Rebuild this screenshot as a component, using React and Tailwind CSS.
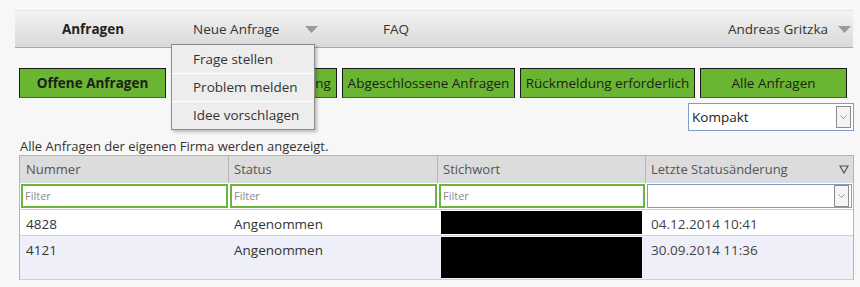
import React from 'react'

const font = { fontFamily: '"Open Sans", "Noto Sans", sans-serif' }

function Caret({ className = '' }) {
  return (
    <svg width="13" height="7" viewBox="0 0 13 7" className={className}>
      <path d="M0 0 H13 L6.5 7 Z" fill="#9a9a9a" />
    </svg>
  )
}

function SelectArrow() {
  return (
    <div className="w-[15px] h-[22px] border border-[#8a8a8a] bg-[#f4f4f4] flex items-center justify-center">
      <svg width="7" height="4" viewBox="0 0 7 4">
        <path d="M0.5 0.5 L3.5 3.5 L6.5 0.5" stroke="#9a9a9a" fill="none" />
      </svg>
    </div>
  )
}

const tabs = [
  { label: 'Offene Anfragen', w: 'w-[147px]', bold: true },
  { label: 'Anfragen in Bearbeitung', w: 'w-[166px]' },
  { label: 'Abgeschlossene Anfragen', w: 'w-[173px]' },
  { label: 'Rückmeldung erforderlich', w: 'w-[175px]' },
  { label: 'Alle Anfragen', w: 'w-[147px]' },
]

const rows = [
  { nr: '4828', status: 'Angenommen', date: '04.12.2014 10:41', h: 'h-[26px]', bg: 'bg-white' },
  { nr: '4121', status: 'Angenommen', date: '30.09.2014 11:36', h: 'h-[44px]', bg: 'bg-[#efeffa]' },
]

export default function App() {
  return (
    <div className="w-[860px] h-[287px] bg-[#f7f7f7] relative overflow-hidden text-[13px] text-[#333]" style={font}>
      {/* Navbar */}
      <div className="pt-[10px] pl-[15px]">
        <nav className="w-[838px] h-[38px] flex items-center bg-gradient-to-b from-[#f3f3f3] to-[#d9d9d9] border-t border-t-[#e4e4e4] border-b border-b-[#a9a9a9] text-[13.5px] text-[#333]">
          <div className="w-[156px] text-center font-bold text-[#222]">Anfragen</div>
          <div className="w-[159px] flex items-center pl-[22px]">
            <span>Neue Anfrage</span>
            <Caret className="ml-[26px]" />
          </div>
          <div className="w-[132px] text-center">FAQ</div>
          <div className="flex-1" />
          <div className="flex items-center pr-[2px]">
            <span>Andreas Gritzka</span>
            <Caret className="ml-[10px]" />
          </div>
        </nav>
      </div>

      {/* Filter tabs */}
      <div className="flex gap-[5px] pl-[19px] mt-[20px]">
        {tabs.map(t => (
          <button
            key={t.label}
            className={`${t.w} h-[30px] bg-[#6ab532] border border-[#1a1a1a] border-b-[#555] text-[13.5px] text-[#1e1e1e] ${t.bold ? 'font-bold' : ''}`}
          >
            {t.label}
          </button>
        ))}
      </div>

      {/* View select */}
      <div className="flex justify-end pr-[6px] mt-[5px]">
        <div className="w-[166px] h-[28px] bg-white border border-[#7b9ec9] flex items-center justify-between pl-[3px] pr-[2px] text-[13.5px] text-[#222]">
          <span>Kompakt</span>
          <SelectArrow />
        </div>
      </div>

      <div className="pl-[20px] mt-[7px] leading-[17px] text-[#333]">Alle Anfragen der eigenen Firma werden angezeigt.</div>

      {/* Table */}
      <div className="ml-[19px] w-[835px] border-l border-r border-t border-[#b5b5b5]">
        <div className="grid grid-cols-[209px_209px_208px_1fr] h-[27px] bg-[#dcdcdc] text-[#555]">
          <div className="pl-[6px] flex items-center border-r border-[#b5b5b5]">Nummer</div>
          <div className="pl-[5px] flex items-center border-r border-[#b5b5b5]">Status</div>
          <div className="pl-[5px] flex items-center border-r border-[#b5b5b5]">Stichwort</div>
          <div className="pl-[5px] pr-[4px] flex items-center justify-between">
            <span>Letzte Statusänderung</span>
            <svg width="10" height="9" viewBox="0 0 10 9">
              <path d="M1 1 H9 L5 8 Z" stroke="#555" strokeWidth="1.2" fill="none" />
            </svg>
          </div>
        </div>
        <div className="grid grid-cols-[209px_209px_208px_1fr] h-[27px] bg-white border-b border-[#d0d0d0]">
          {[0, 1, 2].map(i => (
            <div key={i} className="p-[1px]">
              <div className="h-[24px] border-2 border-[#6db33f] flex items-center pl-[2px] text-[11px] text-[#8a8a8a]">Filter</div>
            </div>
          ))}
          <div className="p-[1px]">
            <div className="h-[24px] border border-[#7b9ec9] flex items-center justify-end pr-[2px]">
              <SelectArrow />
            </div>
          </div>
        </div>
        {rows.map(r => (
          <div key={r.nr} className={`grid grid-cols-[209px_209px_208px_1fr] ${r.h} ${r.bg} border-b border-[#d0d0d0] text-[13.5px] text-[#333]`}>
            <div className="pl-[6px] pt-[4px]">{r.nr}</div>
            <div className="pl-[5px] pt-[4px]">{r.status}</div>
            <div className="pl-[3px] pr-[4px] pt-[1px] pb-[1px]">
              <div className="h-full bg-black" />
            </div>
            <div className="pl-[5px] pt-[4px] text-[#444]">{r.date}</div>
          </div>
        ))}
      </div>

      {/* Open dropdown menu */}
      <div className="absolute left-[171px] top-[44px] w-[144px] bg-[#ededed] border border-[#8c8c8c] shadow-[2px_2px_3px_rgba(0,0,0,0.25)] text-[13.5px] text-[#333]">
        {['Frage stellen', 'Problem melden', 'Idee vorschlagen'].map((item, i) => (
          <div key={item} className={`h-[28px] flex items-center pl-[21px] ${i > 0 ? 'border-t border-white' : ''}`}>
            {item}
          </div>
        ))}
      </div>
    </div>
  )
}
